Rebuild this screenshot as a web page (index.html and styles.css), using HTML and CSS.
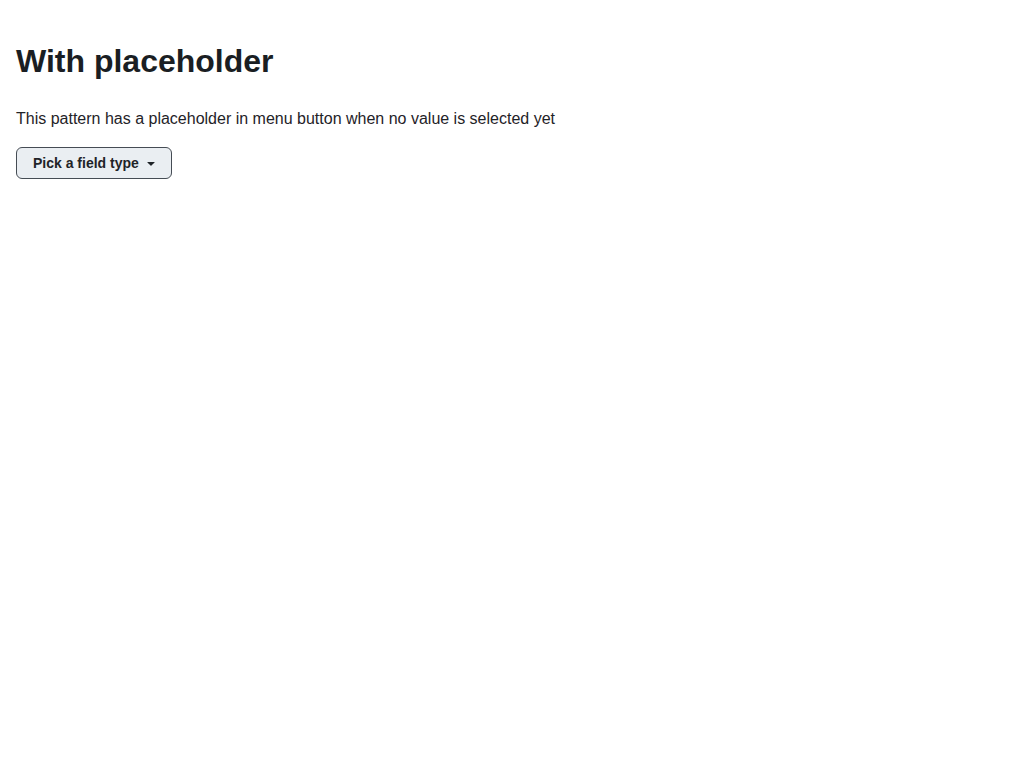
FILE: index.html
```html
<!DOCTYPE html>
<html>
<head>
<meta charset="utf-8">
<link rel="stylesheet" href="styles.css">
</head>
<body>
<main class="page">
  <h1 class="title">With placeholder</h1>
  <p class="desc">This pattern has a placeholder in menu button when no value is selected yet</p>
  <button class="menu-btn" type="button">
    <span class="label">Pick a field type</span>
    <svg class="caret" width="16" height="16" viewBox="0 0 16 16" aria-hidden="true"><path d="m4.427 7.427 3.396 3.396a.25.25 0 0 0 .354 0l3.396-3.396A.25.25 0 0 0 11.396 7H4.604a.25.25 0 0 0-.177.427Z" fill="currentColor"/></svg>
  </button>
</main>
</body>
</html>
```
FILE: styles.css
```css
html, body {
  margin: 0;
  padding: 0;
  background: #ffffff;
}
.page {
  padding: 41px 16px 16px;
  font-family: "Liberation Sans", Arial, sans-serif;
  color: #1f2328;
}
.title {
  margin: 0;
  font-size: 32px;
  line-height: 40px;
  font-weight: 700;
  color: #1a1e23;
}
.desc {
  margin: 26px 0 16px;
  font-size: 16px;
  line-height: 24px;
}
.menu-btn {
  display: inline-flex;
  align-items: center;
  gap: 4px;
  height: 32px;
  box-sizing: border-box;
  padding: 0 12px 0 16px;
  background: #eaeef2;
  border: 1px solid #454c54;
  border-radius: 6px;
  font-family: "Liberation Sans", Arial, sans-serif;
  font-size: 14px;
  font-weight: 700;
  color: #1f2328;
  cursor: pointer;
}
.caret {
  display: block;
}
```
